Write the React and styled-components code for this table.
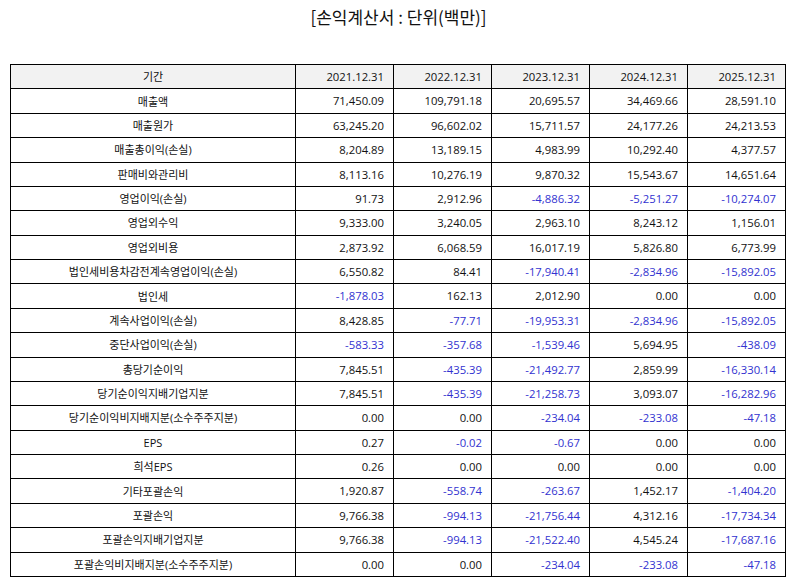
import React from "react";
import styled, { createGlobalStyle } from "styled-components";

const GlobalStyle = createGlobalStyle`
  html, body { margin: 0; padding: 0; background: #fff; }
  body { font-family: "Open Sans", "Noto Sans CJK KR", sans-serif; color: #111; }
`;

const Page = styled.div`
  width: 795px;
  padding: 5px 9px 0 10px;
  box-sizing: border-box;
`;

const Title = styled.h1`
  margin: 0;
  height: 59px;
  font-family: "Noto Sans CJK KR", sans-serif;
  font-size: 17px;
  font-weight: 400;
  line-height: 24px;
  text-align: center;
  color: #111;
  padding-left: 1px;
`;

const Table = styled.table`
  width: 776px;
  border-collapse: collapse;
  table-layout: fixed;
  font-size: 11.3px;
`;

const Row = styled.tr`
  height: 24.38px;
`;

const Cell = styled.td`
  border: 1px solid #000;
  padding: 0 9px;
  line-height: 1;
  font-weight: 400;
  white-space: nowrap;
  font-size: ${(p) => (p.$label ? "11px" : "11.3px")};
  text-align: ${(p) => (p.$label ? "center" : "right")};
  color: ${(p) => (p.$neg ? "#3232d0" : "#111")};
  background: ${(p) => (p.$head ? "#f2f2f2" : "#fff")};
`;

const years = ["2021.12.31", "2022.12.31", "2023.12.31", "2024.12.31", "2025.12.31"];

const rows = [
  ["매출액", "71,450.09", "109,791.18", "20,695.57", "34,469.66", "28,591.10"],
  ["매출원가", "63,245.20", "96,602.02", "15,711.57", "24,177.26", "24,213.53"],
  ["매출총이익(손실)", "8,204.89", "13,189.15", "4,983.99", "10,292.40", "4,377.57"],
  ["판매비와관리비", "8,113.16", "10,276.19", "9,870.32", "15,543.67", "14,651.64"],
  ["영업이익(손실)", "91.73", "2,912.96", "-4,886.32", "-5,251.27", "-10,274.07"],
  ["영업외수익", "9,333.00", "3,240.05", "2,963.10", "8,243.12", "1,156.01"],
  ["영업외비용", "2,873.92", "6,068.59", "16,017.19", "5,826.80", "6,773.99"],
  ["법인세비용차감전계속영업이익(손실)", "6,550.82", "84.41", "-17,940.41", "-2,834.96", "-15,892.05"],
  ["법인세", "-1,878.03", "162.13", "2,012.90", "0.00", "0.00"],
  ["계속사업이익(손실)", "8,428.85", "-77.71", "-19,953.31", "-2,834.96", "-15,892.05"],
  ["중단사업이익(손실)", "-583.33", "-357.68", "-1,539.46", "5,694.95", "-438.09"],
  ["총당기순이익", "7,845.51", "-435.39", "-21,492.77", "2,859.99", "-16,330.14"],
  ["당기순이익지배기업지분", "7,845.51", "-435.39", "-21,258.73", "3,093.07", "-16,282.96"],
  ["당기순이익비지배지분(소수주주지분)", "0.00", "0.00", "-234.04", "-233.08", "-47.18"],
  ["EPS", "0.27", "-0.02", "-0.67", "0.00", "0.00"],
  ["희석EPS", "0.26", "0.00", "0.00", "0.00", "0.00"],
  ["기타포괄손익", "1,920.87", "-558.74", "-263.67", "1,452.17", "-1,404.20"],
  ["포괄손익", "9,766.38", "-994.13", "-21,756.44", "4,312.16", "-17,734.34"],
  ["포괄손익지배기업지분", "9,766.38", "-994.13", "-21,522.40", "4,545.24", "-17,687.16"],
  ["포괄손익비지배지분(소수주주지분)", "0.00", "0.00", "-234.04", "-233.08", "-47.18"],
];

export default function App() {
  return (
    <>
      <GlobalStyle />
      <Page>
        <Title>[손익계산서 : 단위(백만)]</Title>
        <Table>
          <colgroup>
            <col style={{ width: 285 }} />
            {years.map((y) => (
              <col key={y} style={{ width: 98 }} />
            ))}
          </colgroup>
          <thead>
            <Row>
              <Cell as="th" $label $head>기간</Cell>
              {years.map((y) => (
                <Cell as="th" key={y} $head>{y}</Cell>
              ))}
            </Row>
          </thead>
          <tbody>
            {rows.map(([label, ...vals]) => (
              <Row key={label}>
                <Cell $label>{label}</Cell>
                {vals.map((v, i) => (
                  <Cell key={i} $neg={v.startsWith("-")}>{v}</Cell>
                ))}
              </Row>
            ))}
          </tbody>
        </Table>
      </Page>
    </>
  );
}
